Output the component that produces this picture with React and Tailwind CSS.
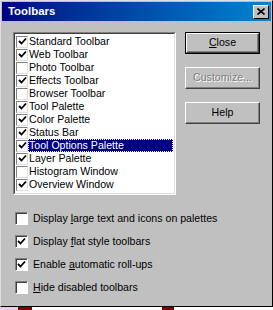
import React from 'react';

const items = [
  { label: 'Standard Toolbar', on: true },
  { label: 'Web Toolbar', on: true },
  { label: 'Photo Toolbar', on: false },
  { label: 'Effects Toolbar', on: true },
  { label: 'Browser Toolbar', on: false },
  { label: 'Tool Palette', on: true },
  { label: 'Color Palette', on: true },
  { label: 'Status Bar', on: true },
  { label: 'Tool Options Palette', on: true, selected: true },
  { label: 'Layer Palette', on: true },
  { label: 'Histogram Window', on: false },
  { label: 'Overview Window', on: true },
];

const Check = () => (
  <svg width="9" height="9" viewBox="0 0 9 9" className="block">
    <path d="M1 4 L3.5 6.5 L8 1.5" fill="none" stroke="#000" strokeWidth="1.8" />
  </svg>
);

// small checkbox used inside the list
const ListBox = ({ on }) => (
  <div className="w-[12px] h-[12px] shrink-0 bg-white border-t border-l border-[#808080] border-r border-b border-r-[#dfdfdf] border-b-[#dfdfdf] flex items-center justify-center">
    {on && <Check />}
  </div>
);

const BigBox = ({ on }) => (
  <div className="w-[13px] h-[13px] shrink-0 bg-white border-t border-l border-[#808080] border-r border-b border-r-white border-b-white shadow-[inset_1px_1px_0_#404040] flex items-center justify-center">
    {on && <Check />}
  </div>
);

const Button = ({ children, isDefault, disabled }) => (
  <div className={'w-[75px] h-[22px] flex items-center justify-center ' + (isDefault ? 'border border-black' : '')}>
    <div className="w-full h-full bg-[#c0c0c0] border-t border-l border-white border-r border-b border-r-[#404040] border-b-[#404040] shadow-[inset_-1px_-1px_0_#808080] flex items-center justify-center">
      <span className={disabled ? 'text-[#808080] [text-shadow:1px_1px_0_#fff]' : 'text-black'}>{children}</span>
    </div>
  </div>
);

const App = () => {
  return (
    <div className="w-[273px] h-[310px] overflow-hidden bg-white" style={{ fontFamily: '"Liberation Sans", Arial, sans-serif' }}>
      <div className="w-[273px] h-[307px] bg-[#c0c0c0] border-t border-l border-[#dfdfdf] border-r border-b border-r-black border-b-black flex flex-col text-[10.6px] text-black">
        <div className="mx-[1px] mt-[1px] h-[19px] bg-gradient-to-r from-[#000080] to-[#1084d0] flex items-center justify-between pl-[6px] pr-[2px]">
          <span className="text-white font-bold text-[11.4px]">Toolbars</span>
          <div className="w-[16px] h-[14px] bg-[#c0c0c0] border-t border-l border-white border-r border-b border-r-black border-b-black flex items-center justify-center">
            <svg width="8" height="7" viewBox="0 0 8 7">
              <path d="M0.5 0.5 L7.5 6.5 M7.5 0.5 L0.5 6.5" stroke="#000" strokeWidth="1.6" />
            </svg>
          </div>
        </div>

        <div className="flex pl-[12px] mt-[11px]">
          <div className="w-[163px] h-[163px] border-t border-l border-[#808080] border-r border-b border-r-white border-b-white">
            <div className="w-full h-full bg-white border-t border-l border-[#404040] border-r border-b border-r-[#dfdfdf] border-b-[#dfdfdf] pt-[1px] pl-[1px]">
              {items.map((it) => (
                <div key={it.label} className="h-[13px] flex items-center">
                  <ListBox on={it.on} />
                  <div className={'h-[13px] flex-1 flex items-center pl-[1px] mr-[1px] ' + (it.selected ? 'bg-[#000080] text-white outline outline-1 outline-dotted outline-[#ffff80] -outline-offset-1' : '')}>
                    {it.label}
                  </div>
                </div>
              ))}
            </div>
          </div>

          <div className="flex flex-col gap-[13px] ml-[9px]">
            <Button isDefault><span><u>C</u>lose</span></Button>
            <Button disabled>Customize...</Button>
            <Button>Help</Button>
          </div>
        </div>

        <div className="flex flex-col gap-[10px] pl-[14px] mt-[17px]">
          <div className="flex items-center gap-[5px] h-[13px]">
            <BigBox on={false} />
            <span>Display <u>l</u>arge text and icons on palettes</span>
          </div>
          <div className="flex items-center gap-[5px] h-[13px]">
            <BigBox on />
            <span>Display <u>f</u>lat style toolbars</span>
          </div>
          <div className="flex items-center gap-[5px] h-[13px]">
            <BigBox on />
            <span>Enable <u>a</u>utomatic roll-ups</span>
          </div>
          <div className="flex items-center gap-[5px] h-[13px]">
            <BigBox on={false} />
            <span><u>H</u>ide disabled toolbars</span>
          </div>
        </div>
      </div>
      <div className="h-[3px] flex">
        <div className="w-[18px] bg-[#e8d0e8]" />
        <div className="w-[14px] bg-[#800000]" />
        <div className="w-[130px] bg-white" />
        <div className="w-[12px] bg-[#800000]" />
        <div className="flex-1 bg-white" />
      </div>
    </div>
  );
};

export default App;
